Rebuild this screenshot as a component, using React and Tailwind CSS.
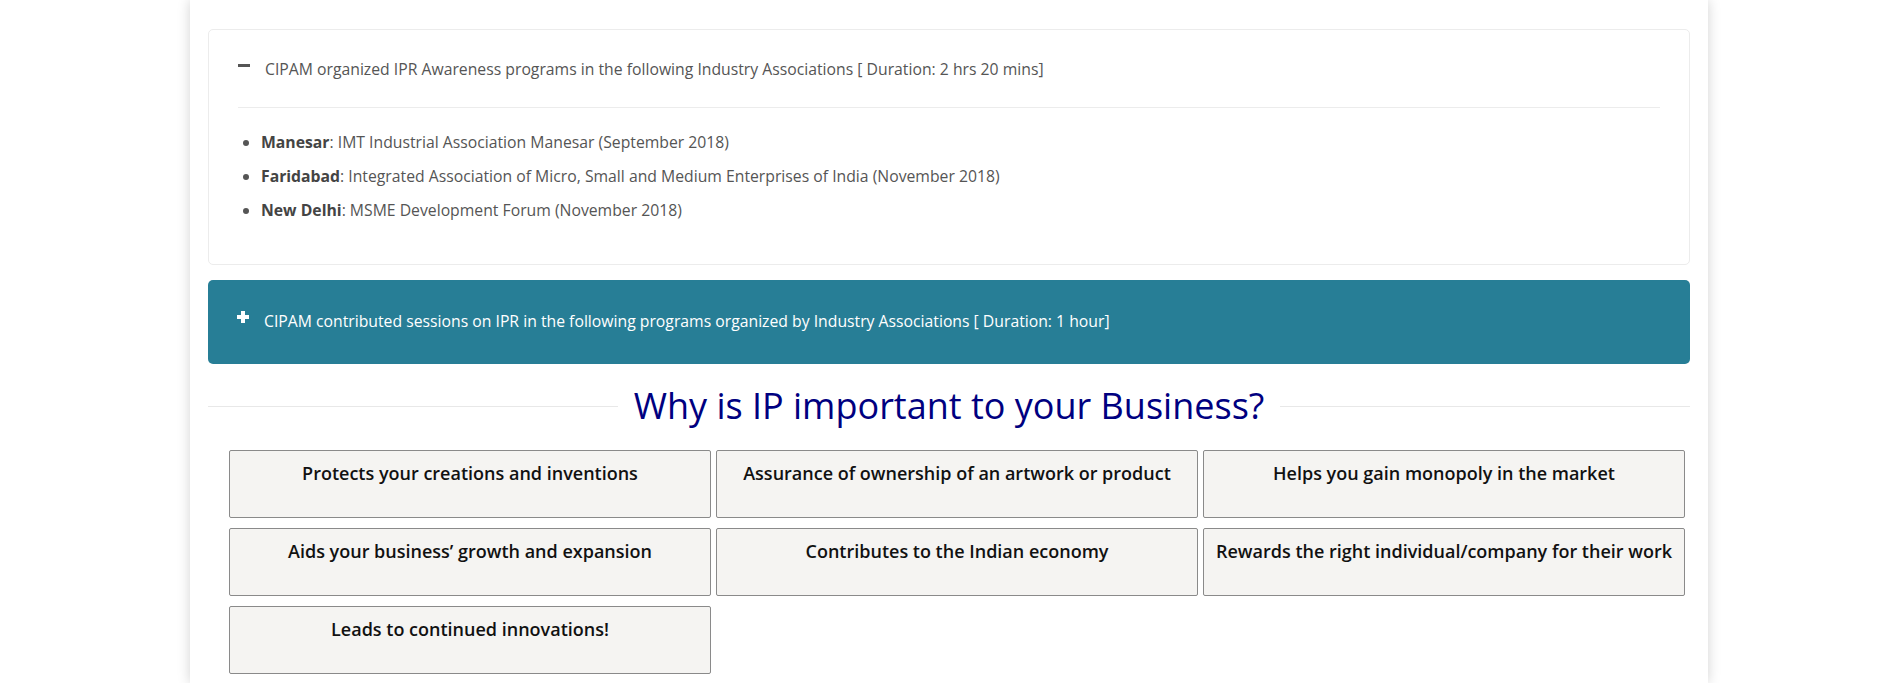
import React from 'react';

const programs = [
  { city: 'Manesar', text: 'IMT Industrial Association Manesar (September 2018)' },
  { city: 'Faridabad', text: 'Integrated Association of Micro, Small and Medium Enterprises of India (November 2018)' },
  { city: 'New Delhi', text: 'MSME Development Forum (November 2018)' },
];

const reasons = [
  'Protects your creations and inventions',
  'Assurance of ownership of an artwork or product',
  'Helps you gain monopoly in the market',
  'Aids your business’ growth and expansion',
  'Contributes to the Indian economy',
  'Rewards the right individual/company for their work',
  'Leads to continued innovations!',
];

const PlusIcon = () => (
  <svg width="12" height="12" viewBox="0 0 12 12" className="mt-[-10px] shrink-0">
    <rect x="4" y="0" width="4" height="12" fill="#fff" />
    <rect x="0" y="4" width="12" height="4" fill="#fff" />
  </svg>
);

const App = () => {
  return (
    <div className="h-[683px] overflow-hidden bg-white font-['Open_Sans',sans-serif]">
      <div className="mx-auto h-full w-[1518px] bg-white px-[18px] pt-[29px] shadow-[0_0_12px_rgba(0,0,0,0.18)]">
        {/* open panel */}
        <div className="rounded-[5px] border border-[#ececec] bg-white px-[29px] pb-[42px]">
          <div className="flex items-center gap-[15px] border-b border-[#ececec] pt-[28px] pb-[25px]">
            <span className="mt-[-8px] h-[3px] w-[12px] shrink-0 bg-[#555]" />
            <span className="text-[15.75px] text-[#555]">
              CIPAM organized IPR Awareness programs in the following Industry Associations [ Duration: 2 hrs 20 mins]
            </span>
          </div>
          <ul className="mt-[22px] flex flex-col gap-[10px] pl-[23px]">
            {programs.map((p) => (
              <li key={p.city} className="list-disc text-[15.75px] leading-[24px] text-[#555] marker:text-[#555]">
                <b className="font-bold text-[#444]">{p.city}</b>: {p.text}
              </li>
            ))}
          </ul>
        </div>

        {/* closed panel */}
        <div className="mt-[15px] flex h-[84px] items-center gap-[15px] rounded-[5px] bg-[#277e96] pl-[29px]">
          <PlusIcon />
          <span className="text-[15.75px] text-white">
            CIPAM contributed sessions on IPR in the following programs organized by Industry Associations [ Duration: 1 hour]
          </span>
        </div>

        {/* heading */}
        <div className="mt-[20px] flex items-center gap-[16px]">
          <div className="mt-[2px] h-px flex-1 bg-[#e8e8e8]" />
          <h2 className="text-[36px] leading-[44px] text-[#000080]">
            Why is IP important to your Business?
          </h2>
          <div className="mt-[2px] h-px flex-1 bg-[#e8e8e8]" />
        </div>

        <div className="mt-[22px] grid grid-cols-3 gap-x-[5px] gap-y-[10px] pl-[21px] pr-[5px]">
          {reasons.map((r) => (
            <div key={r} className="h-[68px] rounded-[2px] border border-[#8a8a8a] bg-[#f5f4f2] pt-[9px] text-center text-[18px] font-semibold text-[#111]">
              {r}
            </div>
          ))}
        </div>
      </div>
    </div>
  );
};

export default App;
